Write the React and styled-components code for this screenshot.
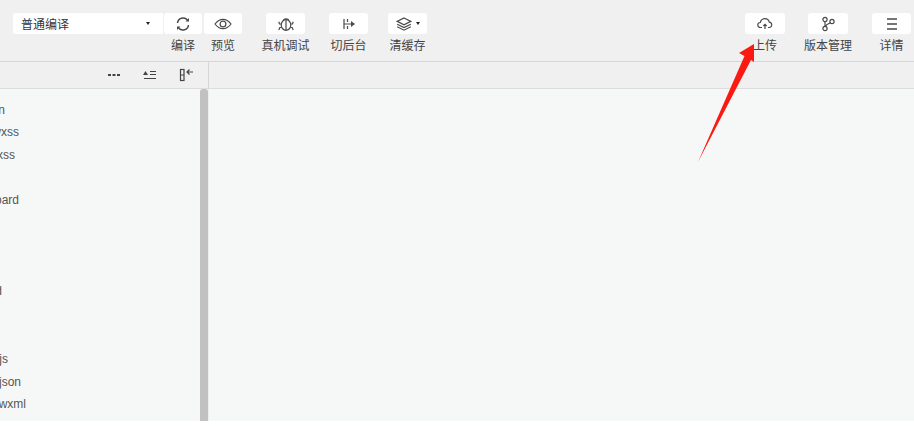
import styled, { createGlobalStyle } from 'styled-components';

const Global = createGlobalStyle`
  html, body { margin: 0; background: #fff; }
  body { font-family: "Liberation Sans", "Noto Sans CJK SC", sans-serif; }
`;

const Window = styled.div`
  position: relative;
  width: 914px;
  height: 421px;
  display: flex;
  flex-direction: column;
  overflow: hidden;
  background: #f6f8f7;
`;

const Toolbar = styled.header`
  flex: none;
  height: 62px;
  box-sizing: border-box;
  padding: 13px 3px 0 13px;
  display: flex;
  justify-content: space-between;
  background: #f0f0f0;
  border-bottom: 1px solid #d6d6d6;
`;

const ToolGroup = styled.div`
  display: flex;
  align-items: flex-start;
`;

const Tool = styled.div`
  width: ${p => p.$width || 39}px;
  margin-left: ${p => p.$gap || 0}px;
  display: flex;
  flex-direction: column;
  align-items: center;
`;

const IconButton = styled.div`
  width: 100%;
  height: 21px;
  background: #fff;
  border-radius: 3px;
  display: flex;
  align-items: center;
  justify-content: center;
  gap: 4px;
  color: #4a4a4a;
`;

const ToolLabel = styled.span`
  margin-top: 5px;
  font-size: 12px;
  line-height: 14px;
  color: #444;
  white-space: nowrap;
`;

const ModeSelect = styled.div`
  width: 150px;
  height: 21px;
  box-sizing: border-box;
  padding: 0 13px 0 8px;
  background: #fff;
  border-radius: 3px 0 0 3px;
  display: flex;
  align-items: center;
  justify-content: space-between;
  font-size: 12px;
  color: #333;
`;

const Caret = styled.i`
  width: 0;
  height: 0;
  border-left: 2.5px solid transparent;
  border-right: 2.5px solid transparent;
  border-top: 3px solid #222;
`;

const SubBar = styled.div`
  height: 27px;
  flex: none;
  box-sizing: border-box;
  display: flex;
  background: #f0f0f0;
  border-bottom: 1px solid #dcdcdc;
`;

const SubTools = styled.div`
  width: 209px;
  box-sizing: border-box;
  border-right: 1px solid #d6d6d6;
  padding: 0 14px 0 0;
  display: flex;
  justify-content: flex-end;
  align-items: center;
  gap: 22px;
  color: #444;
`;

const Body = styled.main`
  flex: 1;
  display: flex;
  min-height: 0;
`;

const Sidebar = styled.aside`
  width: 209px;
  box-sizing: border-box;
  border-right: 1px solid #eceeed;
  display: flex;
`;

const FileList = styled.ul`
  flex: 1;
  margin: 0;
  padding: 9.5px 0 0;
  list-style: none;
  overflow: hidden;
`;

const FileRow = styled.li`
  height: 22.65px;
  width: ${p => p.$end}px;
  display: flex;
  justify-content: flex-end;
  align-items: center;
  overflow: hidden;
  white-space: nowrap;
  font-size: 12px;
  color: #555;
`;

const Scrollbar = styled.div`
  width: 8px;
  background: #c1c1c1;
  border-radius: 3px 3px 0 0;
`;

const Editor = styled.section`
  flex: 1;
`;

const Arrow = styled.svg`
  position: absolute;
  left: 690px;
  top: 40px;
`;

const Glyph = ({ w = 16, h = 16, children, ...rest }) => (
  <svg width={w} height={h} viewBox={`0 0 ${w} ${h}`} fill="none" stroke="currentColor" strokeWidth="1.2" {...rest}>
    {children}
  </svg>
);

const files = [
  ['app.json', 5], ['app.wxss', 19], ['a.wxss', 15], ['', 0], ['dashboard', 19], ['', 0], ['', 0], ['', 0],
  ['d', 2], ['', 0], ['', 0], ['index.js', 8], ['index.json', 21], ['index.wxml', 26],
];

export default function App() {
  return (
    <Window>
      <Global />
      <Toolbar>
        <ToolGroup>
          <ModeSelect>普通编译<Caret /></ModeSelect>
          <Tool $gap={1} $width={38}>
            <IconButton>
              <Glyph>
                <path d="M2.500 7A5.600 5.600 0 0 1 12.400 4" strokeWidth="1.500" />
                <path d="M13.500 9A5.600 5.600 0 0 1 3.600 12" strokeWidth="1.500" />
                <path d="M14 2v3.500h-3.500z" fill="currentColor" stroke="none" />
                <path d="M2 14v-3.500h3.500z" fill="currentColor" stroke="none" />
              </Glyph>
            </IconButton>
            <ToolLabel>编译</ToolLabel>
          </Tool>
          <Tool $gap={2} $width={38}>
            <IconButton>
              <Glyph w={18} h={12}>
                <path d="M1 6C4 2 6.500 1.300 9 1.300S14 2 17 6c-3 4-5.500 4.700-8 4.700S4 10 1 6z" />
                <circle cx="9" cy="6" r="2.900" />
              </Glyph>
            </IconButton>
            <ToolLabel>预览</ToolLabel>
          </Tool>
          <Tool $gap={24}>
            <IconButton>
              <Glyph>
                <ellipse cx="8" cy="9" rx="4.800" ry="5.300" />
                <path d="M8 4v10M5.500 4.500C5.500 2.200 10.500 2.200 10.500 4.500M3.300 8H1.500L.8 5.800M12.700 8h1.800l.7-2.200M3.300 11.500H1.800L.8 14M12.700 11.500h1.500l1 2.500" />
              </Glyph>
            </IconButton>
            <ToolLabel>真机调试</ToolLabel>
          </Tool>
          <Tool $gap={24}>
            <IconButton>
              <Glyph>
                <path d="M3 3v10M6.500 3v3M6.500 10v3M3 8h8" />
                <path d="M10 5l4 3-4 3z" fill="currentColor" stroke="none" />
              </Glyph>
            </IconButton>
            <ToolLabel>切后台</ToolLabel>
          </Tool>
          <Tool $gap={20}>
            <IconButton>
              <Glyph>
                <path d="M8 2l6.800 3.400L8 8.800 1.200 5.400z" />
                <path d="M1.200 8.200L8 11.500l6.800-3.300M1.200 10.800L8 14.200l6.800-3.400" />
              </Glyph>
              <Caret />
            </IconButton>
            <ToolLabel>清缓存</ToolLabel>
          </Tool>
        </ToolGroup>
        <ToolGroup>
          <Tool $width={40}>
            <IconButton>
              <Glyph h={13}>
                <path d="M5 10.500H3.300A2.500 2.500 0 0 1 3.300 5.500 4.600 4.600 0 0 1 12.300 5.200 2.700 2.700 0 0 1 12.700 10.500H11" />
                <path d="M8 12V7.500M6.400 9L8 7.400 9.600 9" />
              </Glyph>
            </IconButton>
            <ToolLabel>上传</ToolLabel>
          </Tool>
          <Tool $gap={23} $width={40}>
            <IconButton>
              <Glyph>
                <circle cx="5" cy="3.500" r="2.100" />
                <circle cx="5" cy="12.500" r="2.100" />
                <circle cx="12" cy="5.500" r="2.100" />
                <path d="M5 5.600v4.800M10.200 6.700C8.500 8 6.500 8 5.500 10.400" />
              </Glyph>
            </IconButton>
            <ToolLabel>版本管理</ToolLabel>
          </Tool>
          <Tool $gap={24}>
            <IconButton>
              <Glyph>
                <path d="M3 3h10M3 8h10M3 13h10" strokeWidth="1.300" />
              </Glyph>
            </IconButton>
            <ToolLabel>详情</ToolLabel>
          </Tool>
        </ToolGroup>
      </Toolbar>
      <SubBar>
        <SubTools>
          <Glyph w={14} h={6}>
            <path d="M1 3h3M5.500 3h3M10 3h3" strokeWidth="1.800" />
          </Glyph>
          <Glyph w={14} h={10}>
            <path d="M2.500 1L5 5H0z" fill="currentColor" stroke="none" />
            <path d="M7 1.500h6M7 4.500h6M1 8.500h12" />
          </Glyph>
          <Glyph w={15} h={14}>
            <rect x="1.500" y="1.500" width="3.500" height="11" />
            <path d="M1.500 7h3.500M14 4H8M10.500 1.500L8 4l2.500 2.500" />
          </Glyph>
        </SubTools>
      </SubBar>
      <Body>
        <Sidebar>
          <FileList>
            {files.map(([name, end], i) => (
              <FileRow key={i} $end={end}>{name}</FileRow>
            ))}
          </FileList>
          <Scrollbar />
        </Sidebar>
        <Editor />
      </Body>
      <Arrow width="70" height="126" viewBox="690 40 70 126">
        <polygon points="754,44 739,53 744.5,56 698,162 751,60 754,62" fill="#fb1a12" />
      </Arrow>
    </Window>
  );
}
